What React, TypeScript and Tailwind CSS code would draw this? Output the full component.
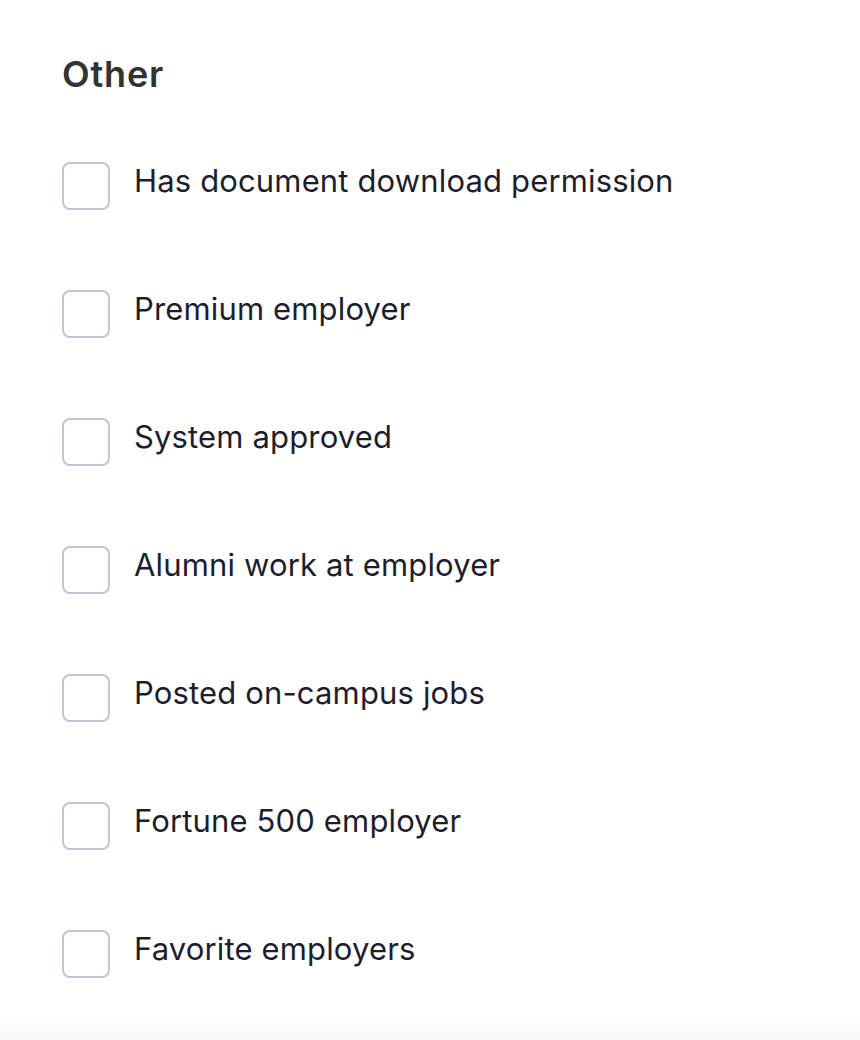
import React from "react"

const options = [
  "Has document download permission",
  "Premium employer",
  "System approved",
  "Alumni work at employer",
  "Posted on-campus jobs",
  "Fortune 500 employer",
  "Favorite employers",
]

export default function App() {
  return (
    <div
      className="w-[860px] h-[1040px] overflow-hidden bg-[linear-gradient(to_bottom,#ffffff_0px,#ffffff_1010px,#f9f9f9_1040px)]"
      style={{ fontFamily: "Inter, 'Noto Sans', sans-serif" }}
    >
      <div className="pl-[62px] pt-[52px]">
        <h2 className="text-[36px] leading-[44px] font-semibold text-[#333333] tracking-[0.8px]">Other</h2>
        <ul className="mt-[66px] flex flex-col gap-[80px]">
          {options.map(label => (
            <li key={label} className="flex items-start gap-[24px]">
              <input
                type="checkbox"
                className="appearance-none w-[48px] h-[48px] shrink-0 rounded-[8px] border-2 border-[#c3c4d4] bg-white"
              />
              <span className="text-[31px] leading-[38px] tracking-[0.15px] text-[#1d1e2d]">{label}</span>
            </li>
          ))}
        </ul>
      </div>
    </div>
  )
}
